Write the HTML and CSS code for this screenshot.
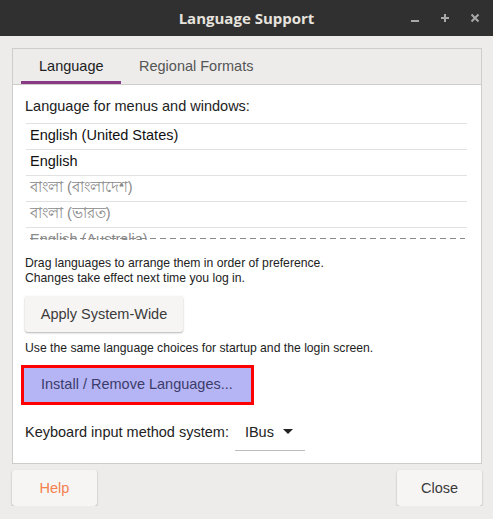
FILE: index.html
```html
<!DOCTYPE html>
<html>
<head>
<meta charset="utf-8">
<link rel="stylesheet" href="styles.css">
</head>
<body>
<div class="titlebar">
  <div class="title">Language Support</div>
  <div class="controls">
    <svg class="ctl" width="10" height="10" viewBox="0 0 10 10"><rect x="1" y="7" width="8" height="2" fill="#a8a8a8"/></svg>
    <svg class="ctl" width="10" height="10" viewBox="0 0 10 10"><rect x="4" y="1" width="2" height="8" fill="#a8a8a8"/><rect x="1" y="4" width="8" height="2" fill="#a8a8a8"/></svg>
    <svg class="ctl" width="10" height="10" viewBox="0 0 10 10"><path d="M1.5 1.5 L8.5 8.5 M8.5 1.5 L1.5 8.5" stroke="#a8a8a8" stroke-width="2"/></svg>
  </div>
</div>
<div class="main">
  <div class="notebook">
    <div class="tabs">
      <div class="tab active">Language</div>
      <div class="tab">Regional Formats</div>
    </div>
    <div class="page">
      <div class="label">Language for menus and windows:</div>
      <div class="listview">
        <div class="row">English (United States)</div>
        <div class="row">English</div>
        <div class="row dim">বাংলা (বাংলাদেশ)</div>
        <div class="row dim">বাংলা (ভারত)</div>
        <div class="row dim">English (Australia)</div>
        <div class="dashes"></div>
      </div>
      <div class="hint">Drag languages to arrange them in order of preference.<br>Changes take effect next time you log in.</div>
      <button class="btn apply">Apply System-Wide</button>
      <div class="hint note">Use the same language choices for startup and the login screen.</div>
      <button class="btn install">Install / Remove Languages...</button>
      <div class="kbd">
        <span class="kbd-label">Keyboard input method system:</span>
        <span class="combo">IBus <svg width="10" height="6" viewBox="0 0 10 6"><path d="M0 0 L10 0 L5 5 Z" fill="#222"/></svg></span>
      </div>
    </div>
  </div>
  <div class="actions">
    <button class="btn foot help">Help</button>
    <button class="btn foot">Close</button>
  </div>
</div>
</body>
</html>
```
FILE: styles.css
```css
html, body {
  margin: 0;
  padding: 0;
  background: #edeceb;
  font-family: "Liberation Sans", Arial, sans-serif;
  color: #2e2e2e;
}
.titlebar {
  height: 36px;
  background: #303030;
  position: relative;
  display: flex;
  align-items: center;
  justify-content: center;
}
.title {
  color: #e6e3de;
  font-family: "Open Sans", "DejaVu Sans", sans-serif;
  font-weight: 700;
  font-size: 15px;
  margin-top: -1px;
}
.controls {
  position: absolute;
  right: 13px;
  top: 13px;
  display: flex;
  gap: 20px;
}
.ctl { display: block; }
.main {
  padding: 12px 11px 0 12px;
}
.notebook {
  border: 1px solid #cfcdca;
  background: #ffffff;
}
.tabs {
  height: 35px;
  background: #edeceb;
  border-bottom: 1px solid #cfcdca;
  display: flex;
  padding-left: 8px;
}
.tab {
  font-size: 14.5px;
  color: #555;
  padding: 0 18px;
  line-height: 34px;
  height: 35px;
  box-sizing: border-box;
}
.tab.active {
  color: #222;
  border-bottom: 3px solid #883a84;
  width: 100px;
  text-align: center;
}
.page {
  padding: 12px 14px 0 12px;
  height: 378px;
  box-sizing: border-box;
}
.label {
  font-size: 14.5px;
  line-height: 18px;
  color: #222;
}
.listview {
  margin-top: 8px;
  margin-left: 1px;
  height: 117px;
  overflow: hidden;
  position: relative;
}
.row {
  height: 25px;
  border-top: 1px solid #e1e1e1;
  font-size: 14.5px;
  line-height: 22px;
  padding-left: 4px;
  color: #111;
  box-sizing: content-box;
}
.row.dim {
  color: #8a8a8a;
}
.dashes {
  position: absolute;
  left: 4px;
  right: 2px;
  bottom: 1px;
  height: 1px;
  background: repeating-linear-gradient(to right, #8a8a8a 0 6px, transparent 6px 10px);
}
.hint {
  font-size: 12.2px;
  line-height: 15px;
  color: #222;
  margin-top: 16px;
}
.hint.note {
  margin-top: 9px;
}
.btn {
  display: block;
  font-family: "Liberation Sans", Arial, sans-serif;
  font-size: 14.5px;
  color: #3a3a3a;
  background: #f6f5f4;
  border: none;
  border-radius: 3px;
  box-shadow: 0 1px 2px rgba(0,0,0,0.3);
  padding: 0;
}
.apply {
  margin-top: 10px;
  width: 158px;
  height: 36px;
}
.install {
  margin-top: 9px;
  margin-left: -4px;
  width: 233px;
  height: 40px;
  background: #b5b5f5;
  border: 3px solid #ff0000;
  border-radius: 0;
  box-shadow: none;
  color: #3c3c6a;
  text-align: left;
  padding-left: 17px;
  padding-bottom: 2px;
  box-sizing: border-box;
}
.kbd {
  margin-top: 9px;
  display: flex;
  align-items: stretch;
  height: 37px;
}
.kbd-label {
  font-size: 14.5px;
  color: #222;
  line-height: 36px;
}
.combo {
  margin-left: 6px;
  width: 70px;
  box-sizing: border-box;
  padding-left: 10px;
  border-bottom: 1px solid #bdbdbd;
  font-size: 14.5px;
  color: #222;
  line-height: 36px;
  display: flex;
  align-items: center;
  gap: 9px;
}
.actions {
  display: flex;
  justify-content: space-between;
  margin-top: 6px;
}
.foot {
  width: 85px;
  height: 36px;
}
.help {
  color: #f5804e;
}
```
